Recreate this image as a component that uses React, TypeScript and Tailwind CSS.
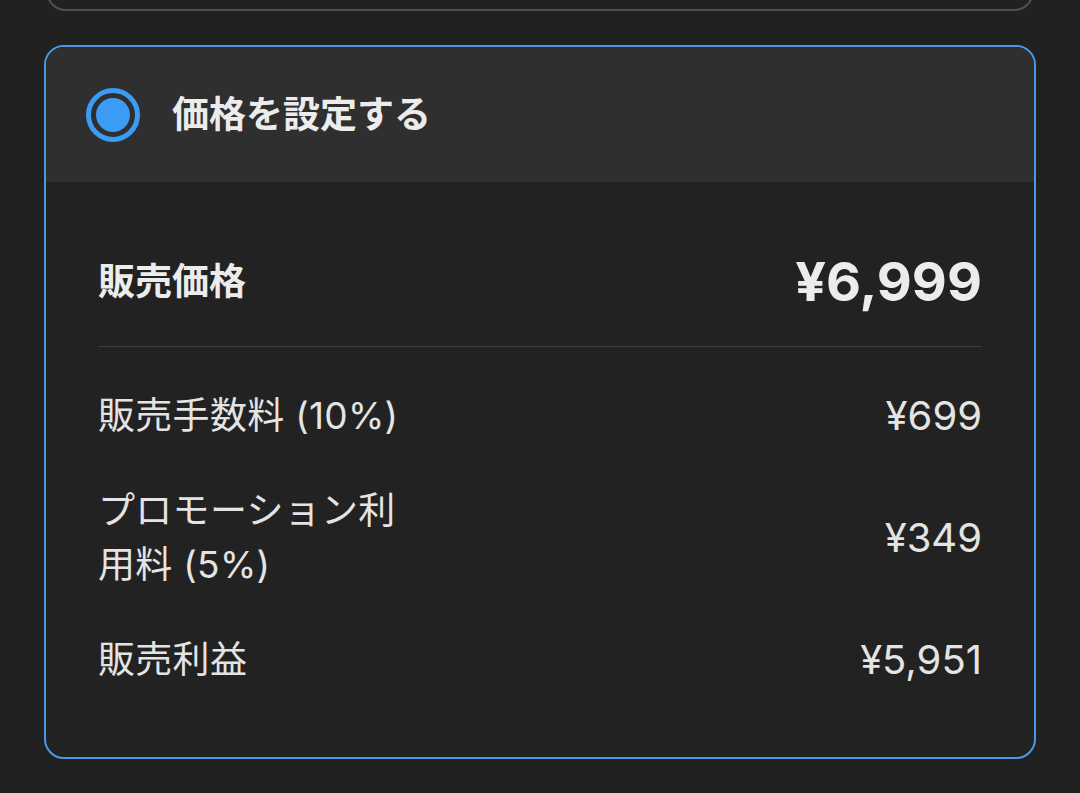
import React from "react";

const font = { fontFamily: "Inter, 'Noto Sans CJK JP', sans-serif" };

function Row({ label, value }: { label: string; value: string }) {
  return (
    <div className="flex items-center justify-between">
      <div className="w-[310px] text-[37px] leading-[54px] text-[#e4e4e4] tracking-[0.3px]">{label}</div>
      <div className="text-[40px] leading-[54px] text-[#e4e4e4]">{value}</div>
    </div>
  );
}

export default function App() {
  return (
    <div className="w-[1080px] h-[793px] bg-[#212121] overflow-hidden" style={font}>
      <div className="h-[11px] overflow-hidden px-[46px]">
        <div className="-mt-[50px] h-[61px] rounded-[20px] border-2 border-[#4f4f4f]" />
      </div>
      <div className="mx-[44px] mt-[34px] rounded-[20px] border-2 border-[#4a98e6] overflow-hidden bg-[#222222]">
        <div className="h-[135px] bg-[#2f2f2f] flex items-center pl-[40px]">
          <div className="w-[54px] h-[54px] rounded-full border-[5px] border-[#3a9cf5] flex items-center justify-center">
            <div className="w-[34px] h-[34px] rounded-full bg-[#3a9cf5]" />
          </div>
          <div className="ml-[32px] text-[37px] font-semibold text-[#ececec] leading-none">価格を設定する</div>
        </div>
        <div className="px-[52px] pt-[62px] pb-[70px]">
          <div className="h-[76px] flex items-center justify-between">
            <div className="text-[37px] font-bold text-[#ececec]">販売価格</div>
            <div className="text-[54px] font-bold text-[#ececec] leading-none">¥6,999</div>
          </div>
          <div className="mt-[26px] h-px bg-[#3c3c3c]" />
          <div className="mt-[42px] flex flex-col gap-[41px]">
            <Row label="販売手数料 (10%)" value="¥699" />
            <Row label="プロモーション利用料 (5%)" value="¥349" />
            <Row label="販売利益" value="¥5,951" />
          </div>
        </div>
      </div>
    </div>
  );
}
